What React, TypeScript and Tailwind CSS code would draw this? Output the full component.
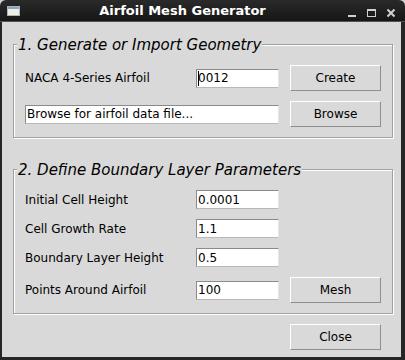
const Field = ({ value, cursor, wide }: { value: string; cursor?: boolean; wide?: boolean }) => {
  return (
    <div
      className={`${wide ? "w-[254px]" : "w-[83px]"} h-[19px] bg-white border border-t-[#8a8a8a] border-l-[#8a8a8a] border-b-[#b8b8b8] border-r-[#e6e6e6] flex items-center pl-px leading-none`}
    >
      {cursor && <span className="inline-block w-px h-[15px] bg-black -mr-px"></span>}
      <span>{value}</span>
    </div>
  );
};

const Button = ({ label }: { label: string }) => {
  return (
    <div className="w-[91px] h-[26px] bg-[#d9d9d9] border border-t-white border-l-white border-b-[#8e8e8e] border-r-[#8e8e8e] flex items-center justify-center">
      {label}
    </div>
  );
};

const Group = ({ title, children, className }: { title: string; children: React.ReactNode; className: string }) => {
  return (
    <div
      className={`relative ml-[11px] w-[380px] border border-[#a0a0a0] shadow-[inset_1px_1px_0_#ffffff,1px_1px_0_#ffffff] ${className}`}
    >
      <span className="absolute top-[-9px] left-[3px] px-px bg-[#d9d9d9] italic text-[15px] leading-[18px]">
        {title}
      </span>
      {children}
    </div>
  );
};

const Row = ({ label, value, button, h }: { label: string; value: string; button?: string; h: string }) => {
  return (
    <div className={`flex items-center ${h}`}>
      <span className="w-[171px]">{label}</span>
      <Field value={value} />
      {button && (
        <div className="ml-[11px]">
          <Button label={button} />
        </div>
      )}
    </div>
  );
};

const App = () => {
  return (
    <div className="w-[405px] h-[360px] bg-[#cfcfcf] flex flex-col text-[12px] text-black font-['DejaVu_Sans',sans-serif]">
      <div className="h-[22px] shrink-0 rounded-t-[6px] bg-gradient-to-b from-[#2a2a2a] to-[#161616] border-b border-[#4a5560] flex items-center">
        <svg width="13" height="10" viewBox="0 0 13 10" className="ml-[7px]">
          <rect x="0" y="0" width="13" height="10" fill="#eeeedd" />
          <rect x="0" y="0" width="13" height="3" fill="#8aa4c8" />
          <rect x="0.5" y="0.5" width="12" height="9" fill="none" stroke="#a8b4c4" />
        </svg>
        <span className="flex-1 text-center text-white font-bold text-[13px] leading-none">Airfoil Mesh Generator</span>
        <svg width="60" height="21" viewBox="0 0 60 21">
          <rect x="3" y="15" width="8" height="2" fill="#d0d0d0" />
          <rect x="22.5" y="9.5" width="8" height="7" fill="none" stroke="#d0d0d0" />
          <rect x="22" y="9" width="9" height="2" fill="#d0d0d0" />
          <path d="M42.5 9.5 L49.5 16.5 M49.5 9.5 L42.5 16.5" stroke="#d0d0d0" strokeWidth="2" />
        </svg>
      </div>
      <div className="flex-1 bg-[#d9d9d9] border-l-2 border-r-[4px] border-b-[3px] border-[#262626] flex flex-col">
        <Group title="1. Generate or Import Geometry" className="mt-[22px] pt-[20px] pb-[10px] pl-[11px] flex flex-col gap-[10px]">
          <div className="flex items-center h-[26px]">
            <span className="w-[171px]">NACA 4-Series Airfoil</span>
            <Field value="0012" cursor />
            <div className="ml-[11px]">
              <Button label="Create" />
            </div>
          </div>
          <div className="flex items-center h-[26px]">
            <Field value="Browse for airfoil data file..." wide />
            <div className="ml-[11px]">
              <Button label="Browse" />
            </div>
          </div>
        </Group>
        <Group title="2. Define Boundary Layer Parameters" className="mt-[31px] pt-[15px] pb-[10px] pl-[11px] flex flex-col">
          <Row label="Initial Cell Height" value="0.0001" h="h-[29px]" />
          <Row label="Cell Growth Rate" value="1.1" h="h-[29px]" />
          <Row label="Boundary Layer Height" value="0.5" h="h-[29px]" />
          <div className="mt-[5px]">
            <Row label="Points Around Airfoil" value="100" button="Mesh" h="h-[26px]" />
          </div>
        </Group>
        <div className="mt-[10px] ml-[288px]">
          <Button label="Close" />
        </div>
      </div>
    </div>
  );
};

export default App;
